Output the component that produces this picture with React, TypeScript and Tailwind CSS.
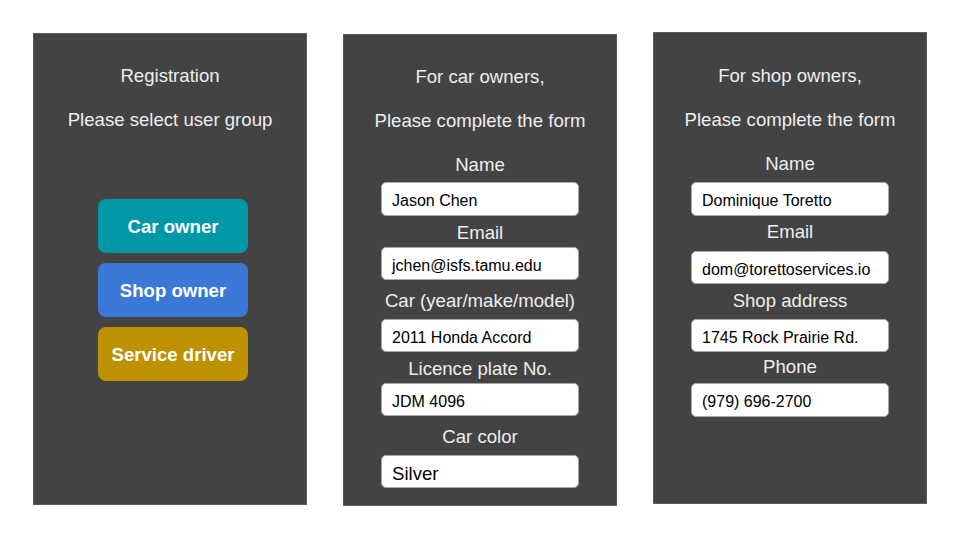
import type { ReactNode } from 'react';

type Row =
  | { kind: 'label'; text: string; mt: string }
  | { kind: 'input'; value: string; mt: string; h: string; big?: boolean };

const carOwnerRows: Row[] = [
  { kind: 'label', text: 'For car owners,', mt: 'mt-[30px]' },
  { kind: 'label', text: 'Please complete the form', mt: 'mt-[22px]' },
  { kind: 'label', text: 'Name', mt: 'mt-[22px]' },
  { kind: 'input', value: 'Jason Chen', mt: 'mt-[7px]', h: 'h-[34px]' },
  { kind: 'label', text: 'Email', mt: 'mt-[5px]' },
  { kind: 'input', value: 'jchen@isfs.tamu.edu', mt: 'mt-[4px]', h: 'h-[33px]' },
  { kind: 'label', text: 'Car (year/make/model)', mt: 'mt-[9px]' },
  { kind: 'input', value: '2011 Honda Accord', mt: 'mt-[8px]', h: 'h-[33px]' },
  { kind: 'label', text: 'Licence plate No.', mt: 'mt-[5px]' },
  { kind: 'input', value: 'JDM 4096', mt: 'mt-[4px]', h: 'h-[33px]' },
  { kind: 'label', text: 'Car color', mt: 'mt-[9px]' },
  { kind: 'input', value: 'Silver', mt: 'mt-[8px]', h: 'h-[33px]', big: true },
];

const shopOwnerRows: Row[] = [
  { kind: 'label', text: 'For shop owners,', mt: 'mt-[31px]' },
  { kind: 'label', text: 'Please complete the form', mt: 'mt-[22px]' },
  { kind: 'label', text: 'Name', mt: 'mt-[22px]' },
  { kind: 'input', value: 'Dominique Toretto', mt: 'mt-[8px]', h: 'h-[34px]' },
  { kind: 'label', text: 'Email', mt: 'mt-[4px]' },
  { kind: 'input', value: 'dom@torettoservices.io', mt: 'mt-[9px]', h: 'h-[33px]' },
  { kind: 'label', text: 'Shop address', mt: 'mt-[5px]' },
  { kind: 'input', value: '1745 Rock Prairie Rd.', mt: 'mt-[8px]', h: 'h-[33px]' },
  { kind: 'label', text: 'Phone', mt: 'mt-[3px]' },
  { kind: 'input', value: '(979) 696-2700', mt: 'mt-[6px]', h: 'h-[34px]' },
];

const groups = [
  { label: 'Car owner', bg: 'bg-[#0097a7]' },
  { label: 'Shop owner', bg: 'bg-[#3c78d8]' },
  { label: 'Service driver', bg: 'bg-[#bf9000]' },
];

function Panel({ mt, children }: { mt: string; children: ReactNode }) {
  return (
    <div
      className={`${mt} w-[274px] h-[472px] shrink-0 bg-[#434343] border border-[#5b5b5b] flex flex-col items-center`}
    >
      {children}
    </div>
  );
}

function Label({ text, mt }: { text: string; mt: string }) {
  return (
    <p className={`${mt} pt-[2px] text-[18.6px] leading-[20px] text-[#eeeeee]`}>{text}</p>
  );
}

function FormRows({ rows }: { rows: Row[] }) {
  return (
    <>
      {rows.map((r, i) =>
        r.kind === 'label' ? (
          <Label key={i} text={r.text} mt={r.mt} />
        ) : (
          <div
            key={i}
            className={`${r.mt} ${r.h} w-[198px] bg-white border border-[#a8a8a8] rounded-[5px] flex items-center pl-[10px] pt-[4px] text-black ${
              r.big ? 'text-[18.6px]' : 'text-[16px]'
            }`}
          >
            {r.value}
          </div>
        )
      )}
    </>
  );
}

export default function App() {
  return (
    <div
      className="w-[960px] h-[540px] bg-white flex items-start gap-[36px] pl-[33px]"
      style={{ fontFamily: '"Liberation Sans", Arial, sans-serif' }}
    >
      <Panel mt="mt-[33px]">
        <Label text="Registration" mt="mt-[30px]" />
        <Label text="Please select user group" mt="mt-[22px]" />
        <div className="mt-[69px] ml-[6px] flex flex-col gap-[10px]">
          {groups.map((g) => (
            <button
              key={g.label}
              className={`${g.bg} w-[150px] h-[54px] rounded-[8px] text-white font-bold text-[18.6px] flex items-center justify-center pt-[2px]`}
            >
              {g.label}
            </button>
          ))}
        </div>
      </Panel>

      <Panel mt="mt-[34px]">
        <FormRows rows={carOwnerRows} />
      </Panel>

      <Panel mt="mt-[32px]">
        <FormRows rows={shopOwnerRows} />
      </Panel>
    </div>
  );
}
